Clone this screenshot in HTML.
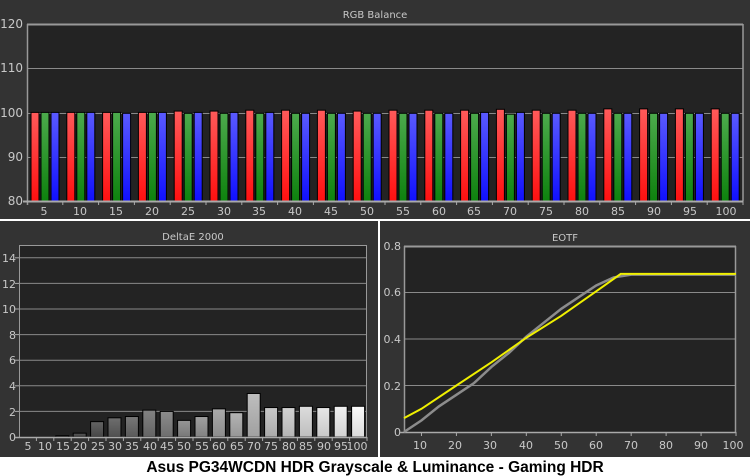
<!DOCTYPE html>
<html><head><meta charset="utf-8"><style>
html,body{margin:0;padding:0;width:750px;height:476px;overflow:hidden;background:#fff}
svg{display:block}
text{font-family:"DejaVu Sans","Liberation Sans",sans-serif;fill:#c8c8c8;font-size:11px}
</style></head><body>
<svg id="s" width="750" height="476" xmlns="http://www.w3.org/2000/svg">
<defs>
<linearGradient id="gr" x1="0" y1="0" x2="0" y2="1"><stop offset="0" stop-color="#ff5a5a"/><stop offset="1" stop-color="#ff1010"/></linearGradient>
<linearGradient id="gg" x1="0" y1="0" x2="0" y2="1"><stop offset="0" stop-color="#4caa4c"/><stop offset="1" stop-color="#0e820e"/></linearGradient>
<linearGradient id="gb" x1="0" y1="0" x2="0" y2="1"><stop offset="0" stop-color="#5a5aff"/><stop offset="1" stop-color="#1010ff"/></linearGradient>
</defs>
<rect x="0" y="0" width="750" height="457" fill="#333"/>
<rect x="0" y="219" width="750" height="2" fill="#fff"/>
<rect x="378" y="221" width="2" height="236" fill="#fff"/>
<rect x="27" y="24" width="716" height="177" fill="#232323"/>
<text x="375" y="18" text-anchor="middle" style="font-size:10px">RGB Balance</text>
<text x="23" y="28" text-anchor="end" style="font-size:12px">120</text>
<text x="23" y="72" text-anchor="end" style="font-size:12px">110</text>
<text x="23" y="117" text-anchor="end" style="font-size:12px">100</text>
<text x="23" y="161" text-anchor="end" style="font-size:12px">90</text>
<text x="23" y="205" text-anchor="end" style="font-size:12px">80</text>
<g id="topx" text-anchor="middle" style="font-size:12px">
<text x="44" y="215">5</text><text x="80" y="215">10</text><text x="116" y="215">15</text><text x="152" y="215">20</text><text x="188" y="215">25</text><text x="224" y="215">30</text><text x="259" y="215">35</text><text x="295" y="215">40</text><text x="331" y="215">45</text><text x="367" y="215">50</text><text x="403" y="215">55</text><text x="439" y="215">60</text><text x="474" y="215">65</text><text x="510" y="215">70</text><text x="546" y="215">75</text><text x="582" y="215">80</text><text x="618" y="215">85</text><text x="654" y="215">90</text><text x="690" y="215">95</text><text x="726" y="215">100</text>
</g>
<rect x="19" y="245" width="348" height="192" fill="#232323"/>
<text x="193" y="240" text-anchor="middle" style="font-size:10px">DeltaE 2000</text>
<g text-anchor="end" style="font-size:11px">
<text x="16" y="262">14</text><text x="16" y="288">12</text><text x="16" y="313">10</text><text x="16" y="339">8</text><text x="16" y="364">6</text><text x="16" y="390">4</text><text x="16" y="416">2</text><text x="16" y="441">0</text>
</g>
<g text-anchor="middle" style="font-size:11px">
<text x="28" y="450">5</text><text x="45" y="450">10</text><text x="63" y="450">15</text><text x="80" y="450">20</text><text x="98" y="450">25</text><text x="115" y="450">30</text><text x="132" y="450">35</text><text x="150" y="450">40</text><text x="167" y="450">45</text><text x="184" y="450">50</text><text x="202" y="450">55</text><text x="219" y="450">60</text><text x="237" y="450">65</text><text x="254" y="450">70</text><text x="271" y="450">75</text><text x="289" y="450">80</text><text x="306" y="450">85</text><text x="324" y="450">90</text><text x="341" y="450">95</text><text x="357" y="450">100</text>
</g>
<rect x="404" y="246" width="332" height="186" fill="#232323"/>
<text x="565" y="241" text-anchor="middle" style="font-size:10px">EOTF</text>
<g text-anchor="end" style="font-size:11px">
<text x="401" y="250">0.8</text><text x="401" y="296">0.6</text><text x="401" y="343">0.4</text><text x="401" y="390">0.2</text><text x="401" y="436">0</text>
</g>
<g text-anchor="middle" style="font-size:11px">
<text x="420" y="449">10</text><text x="455" y="449">20</text><text x="490" y="449">30</text><text x="526" y="449">40</text><text x="561" y="449">50</text><text x="596" y="449">60</text><text x="631" y="449">70</text><text x="666" y="449">80</text><text x="701" y="449">90</text><text x="733" y="449">100</text>
</g>
<g id="dyn"></g>
<rect x="0" y="457" width="750" height="19" fill="#fff"/>
<text x="375" y="472" text-anchor="middle" style="font-family:'Liberation Sans',sans-serif;font-weight:bold;font-size:15.5px;fill:#000">Asus PG34WCDN HDR Grayscale &amp; Luminance - Gaming HDR</text>
</svg>
<script>
var d=document.getElementById('dyn'),h='';
function L(x1,y1,x2,y2,c,w){h+='<line x1="'+x1+'" y1="'+y1+'" x2="'+x2+'" y2="'+y2+'" stroke="'+c+'" stroke-width="'+(w||1)+'"/>';}
function R(x,y,w,hh,f){h+='<rect x="'+x+'" y="'+y+'" width="'+w+'" height="'+hh+'" fill="'+f+'" stroke="#000" stroke-width="1"/>';}
[24,68,113,157].forEach(function(y){L(27,y+.5,743,y+.5,'#8a8a8a');});
L(27,24.5,743,24.5,'#999',2);
var tv=[[100,100,100],[100,100,100],[100,100,99.8],[100,100,100],[100.3,99.8,100],[100.3,99.8,100],[100.5,99.8,100],[100.5,99.8,99.8],[100.5,99.8,99.8],[100.3,99.8,99.8],[100.5,99.8,99.8],[100.5,99.8,99.8],[100.5,99.8,100],[100.7,99.6,100],[100.5,99.8,99.8],[100.5,99.8,99.8],[100.8,99.8,99.8],[100.8,99.8,99.8],[100.8,99.8,99.8],[100.8,99.8,99.8]];
var gid=['gr','gg','gb'];
for(var i=0;i<20;i++){var gx=27+i*35.8;for(var k=0;k<3;k++){var y=201-(tv[i][k]-80)*4.43;R(gx+4+k*10,y,8,201-y,'url(#'+gid[k]+')');}
L(gx+35.8,201,gx+35.8,205,'#aaa');}
L(27.5,24,27.5,205,'#999',1.5);L(743,24,743,201,'#999',1.5);L(23,201.5,743,201.5,'#aaa',2);
for(var v=2;v<=14;v+=2){var y=437-v*12.8;L(19,y,367,y,'#8a8a8a');L(15,y,19,y,'#aaa');}
L(19.5,245,19.5,437,'#999');L(366.5,245,366.5,437,'#999');L(19,245.5,367,245.5,'#999');
var de=[0,0,.1,.3,1.2,1.5,1.6,2.1,2.0,1.3,1.6,2.2,1.9,3.4,2.3,2.3,2.4,2.3,2.4,2.4];
for(var i=0;i<20;i++){var gx=19+i*17.4,hh=de[i]*12.8;var c=Math.round(60+i*10);if(i>=14)c=Math.min(255,200+(i-14)*10);
if(hh>0){var id='dg'+i;h+='<linearGradient id="'+id+'" x1="0" y1="0" x2="0" y2="1"><stop offset="0" stop-color="rgb('+c+','+c+','+c+')"/><stop offset="1" stop-color="rgb('+(c-30)+','+(c-30)+','+(c-30)+')"/></linearGradient>';R(gx+2,437-hh,13,hh,'url(#'+id+')');}
L(gx+17.4,437,gx+17.4,441,'#aaa');}
L(15,437.5,367,437.5,'#aaa',1.5);
[292.5,339,385.5].forEach(function(y){L(404,y,736,y,'#8a8a8a');});
L(404,246.5,736,246.5,'#999',2);L(404.5,246,404.5,432,'#999',1.5);L(735.5,246,735.5,432,'#999',1.5);L(400,432.5,736,432.5,'#aaa',1.5);
[10,20,30,40,50,60,70,80,90,100].forEach(function(v){var x=404+(v-5)*3.495;L(x,432,x,436,'#aaa');});
function P(pts,c,w){var s='';pts.forEach(function(p,j){var x=404+(p[0]-5)*3.495,y=432-p[1]*232.5;s+=(j?'L':'M')+x.toFixed(1)+' '+y.toFixed(1);});h+='<path d="'+s+'" fill="none" stroke="'+c+'" stroke-width="'+w+'"/>';}
P([[5,0],[10,0.05],[15,0.11],[20,0.16],[25,0.21],[30,0.28],[35,0.34],[40,0.41],[45,0.47],[50,0.53],[55,0.58],[60,0.63],[65,0.665],[70,0.677],[100,0.677]],'#8c8c8c',2.5);
P([[5,0.06],[10,0.1],[20,0.2],[30,0.3],[40,0.405],[50,0.5],[60,0.605],[67,0.68],[100,0.68]],'#f0f000',2);
d.innerHTML=h;
</script>
</body></html>
